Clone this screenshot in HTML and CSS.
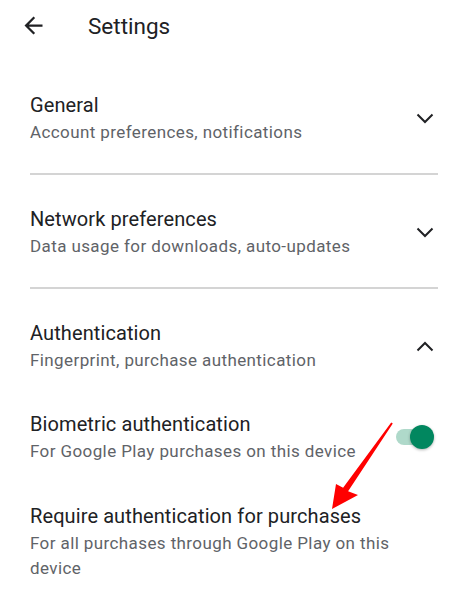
FILE: index.html
```html
<!DOCTYPE html>
<html>
	<head>
		<meta charset="utf-8" />
		<title>Settings</title>
		<link rel="stylesheet" href="styles.css">
	</head>
	<body>
		<div class="page">
			<div class="top">
				<svg class="back" viewBox="0 0 24 24" width="27" height="27">
					<path d="M20 11H7.83l5.59-5.59L12 4l-8 8 8 8 1.41-1.41L7.83 13H20v-2z" fill="#202124" />
				</svg>
				<div class="title">Settings</div>
			</div>

			<div class="group">
				<div class="row">
					<div class="text">
						<div class="name">General</div>
						<div class="desc">Account preferences, notifications</div>
					</div>
					<svg class="chev" viewBox="0 0 18 11" width="18" height="11">
						<polyline points="1.5,1.5 9,9 16.5,1.5" />
					</svg>
				</div>
			</div>
			<div class="line"></div>

			<div class="group">
				<div class="row">
					<div class="text">
						<div class="name">Network preferences</div>
						<div class="desc">Data usage for downloads, auto-updates</div>
					</div>
					<svg class="chev" viewBox="0 0 18 11" width="18" height="11">
						<polyline points="1.5,1.5 9,9 16.5,1.5" />
					</svg>
				</div>
			</div>
			<div class="line"></div>

			<div class="group">
				<div class="row">
					<div class="text">
						<div class="name">Authentication</div>
						<div class="desc">Fingerprint, purchase authentication</div>
					</div>
					<svg class="chev" viewBox="0 0 18 11" width="18" height="11">
						<polyline points="1.5,9.5 9,2 16.5,9.5" />
					</svg>
				</div>
				<div class="row sub first">
					<div class="text">
						<div class="name">Biometric authentication</div>
						<div class="desc">For Google Play purchases on this device</div>
					</div>
					<div class="toggle">
						<div class="track"></div>
						<div class="knob"></div>
					</div>
				</div>
				<div class="row sub">
					<div class="text">
						<div class="name">Require authentication for purchases</div>
						<div class="desc">For all purchases through Google Play on this device</div>
					</div>
				</div>
			</div>

			<!-- red annotation arrow -->
			<svg class="arrow" viewBox="0 0 468 600" width="468" height="600">
				<polygon points="391.2,422.4 392.8,423.6 348.1,491.2 358,495 332,509 336,484 343.1,487.8" />
			</svg>
		</div>
	</body>
</html>
```

FILE: styles.css
```css
* {
	margin: 0;
	padding: 0;
	box-sizing: border-box;
}
body {
	background: #fff;
	font-family: Roboto, "Noto Sans", sans-serif;
	color: #202124;
}
.page {
	width: 468px;
	height: 600px;
	position: relative;
	overflow: hidden;
}
.top {
	height: 51px;
	margin-bottom: 10px;
	display: flex;
	align-items: center;
	padding-left: 20px;
}
.back {
	display: block;
	margin-right: 41px;
}
.title {
	font-size: 22.5px;
	line-height: 30px;
	color: #202124;
}
.group {
	padding: 30px 34px 28px 30px;
}
.row {
	display: flex;
	align-items: center;
	justify-content: space-between;
}
.text {
	flex: 1;
}
.name {
	font-size: 20px;
	line-height: 28px;
	letter-spacing: 0.1px;
	color: #202124;
}
.desc {
	margin-top: 1px;
	font-size: 17px;
	line-height: 25px;
	letter-spacing: 0.4px;
	color: #5f6368;
}
.sub {
	margin-top: 38px;
}
.sub.first {
	margin-top: 37px;
}
.chev {
	display: block;
	fill: none;
	stroke: #202124;
	stroke-width: 2;
}
.line {
	height: 2px;
	margin: 0 30px 0 30px;
	background: #d4d4d4;
}
.toggle {
	position: relative;
	width: 40px;
	height: 24px;
	margin-left: 20px;
}
.track {
	position: absolute;
	left: 2px;
	top: 4px;
	width: 32px;
	height: 16px;
	border-radius: 8px;
	background: #afd9ca;
}
.knob {
	position: absolute;
	right: 0;
	top: 0;
	width: 24px;
	height: 24px;
	border-radius: 50%;
	background: #01875f;
	box-shadow: 0 1px 3px rgba(0, 0, 0, 0.3);
}
.arrow {
	position: absolute;
	left: 0;
	top: 0;
	fill: #ff0000;
}
```
